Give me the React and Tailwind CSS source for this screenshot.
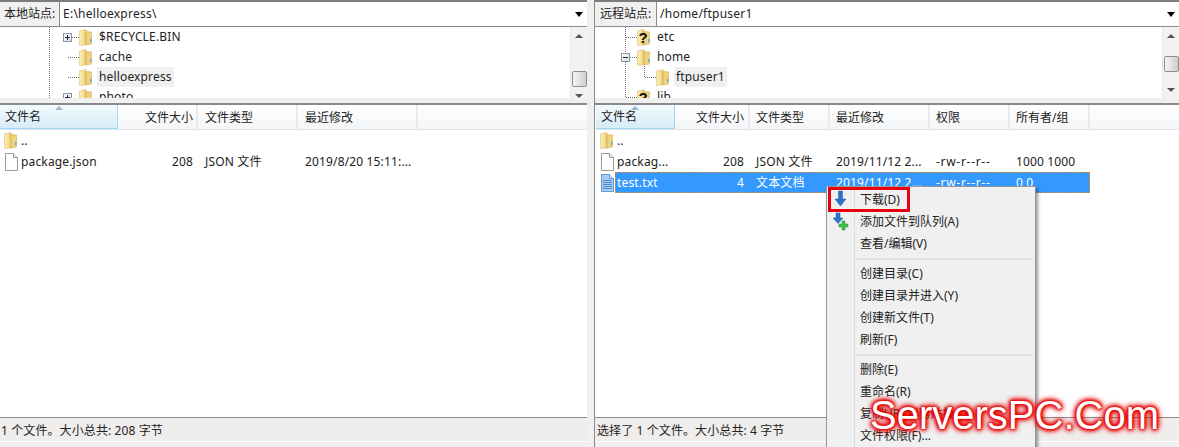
import React from "react";

const ff = "font-['Noto_Sans','Noto_Sans_CJK_SC',sans-serif]";

function Folder({ q }) {
  return (
    <svg width="13" height="17" viewBox="0 0 13 17" className="shrink-0">
      <defs>
        <linearGradient id="fg" x1="0" y1="0" x2="1" y2="0">
          <stop offset="0" stopColor="#fbeeb8" />
          <stop offset="0.7" stopColor="#f5dc8e" />
          <stop offset="1" stopColor="#e3bb5c" />
        </linearGradient>
      </defs>
      <path d="M0.5 2 L7 0.5 L7 16 L0.5 16.5 Z" fill="url(#fg)" stroke="#dcc07a" strokeWidth="0.6" />
      <path d="M7 2.5 L12.5 3 L12.5 15 L7 16 Z" fill="#efd27c" stroke="#d4ac58" strokeWidth="0.6" />
      <rect x="11" y="10" width="1.5" height="3" fill="#5fb0e6" />
      {q && <text x="6.2" y="13.5" textAnchor="middle" fontSize="15" fontWeight="700" fill="#111" fontFamily="Liberation Sans">?</text>}
    </svg>
  );
}

function FileIcon({ blue }) {
  return (
    <svg width="15" height="18" viewBox="0 0 15 18" className="shrink-0">
      <path d="M1.5 0.5 H9.5 L13.5 4.5 V17.5 H1.5 Z" fill={blue ? "#a9cdf1" : "#ffffff"} stroke={blue ? "#5f9bd8" : "#9a9a9a"} />
      <path d="M9.5 0.5 V4.5 H13.5" fill={blue ? "#d8e9fa" : "#eeeeee"} stroke={blue ? "#5f9bd8" : "#9a9a9a"} />
      {blue && <path d="M3 6.5 H12 M3 8.5 H12 M3 10.5 H12 M3 12.5 H12 M3 14.5 H12" stroke="#4d8bd0" strokeWidth="1" />}
    </svg>
  );
}

function PlusBox({ minus }) {
  return (
    <span className="w-[9px] h-[9px] border border-[#8c97a5] bg-gradient-to-br from-white to-[#d8dde6] flex items-center justify-center relative shrink-0">
      <span className="w-[5px] h-px bg-[#1c2a4a]" />
      {!minus && <span className="absolute w-px h-[5px] bg-[#1c2a4a]" />}
    </span>
  );
}

function SiteBar({ label, labelW, value }) {
  return (
    <div className="h-[25px] flex bg-white border-b border-[#8a8a8a] shrink-0">
      <div className={`${labelW} bg-[#f0f0f0] border-r border-[#8a8a8a] flex items-center justify-center text-[12px] text-[#222] shrink-0`}>{label}</div>
      <div className="flex-1 flex items-center pl-[3px] text-[12px] text-[#222] tracking-[0.25px]">{value}</div>
      <div className="w-[17px] flex items-center justify-center shrink-0">
        <span className="border-x-[4px] border-x-transparent border-t-[5px] border-t-black" />
      </div>
    </div>
  );
}

function Scrollbar({ spacer }) {
  return (
    <div className="w-[17px] bg-[#f2f2f2] flex flex-col items-center shrink-0 border-l border-[#e8e8e8]">
      <div className="h-[17px] flex items-center justify-center shrink-0">
        <span className="border-x-[4px] border-x-transparent border-b-[4px] border-b-[#555]" />
      </div>
      <div className={`${spacer} shrink-0`} />
      <div className="w-[15px] h-[16px] rounded-[2px] border border-[#8f8f8f] bg-gradient-to-r from-[#f5f5f5] to-[#cfcfcf] shrink-0" />
      <div className="flex-1" />
      <div className="h-[17px] flex items-center justify-center shrink-0">
        <span className="border-x-[4px] border-x-transparent border-t-[4px] border-t-[#555]" />
      </div>
    </div>
  );
}

function TreeRow({ box, minus, q, text, active, lead }) {
  return (
    <div className="relative h-[20px] flex items-center shrink-0">
      <span className="w-[9px] flex justify-center shrink-0">{box && <PlusBox minus={minus} />}</span>
      <span className={`${lead} shrink-0`} />
      <Folder q={q} />
      <span className={`ml-[5px] px-[2px] h-[20px] leading-[20px] text-[12px] text-[#222] tracking-[0.15px] ${active ? "bg-[#f0f0f0]" : ""}`}>{text}</span>
    </div>
  );
}

function Dots({ d }) {
  return <path d={d} stroke="#707070" strokeWidth="1" strokeDasharray="1 1" fill="none" shapeRendering="crispEdges" />;
}

function Header({ cols }) {
  return (
    <div className="h-[25px] flex shrink-0 bg-gradient-to-b from-white to-[#f3f5f7] border-b border-[#e2e4e7] text-[12px] text-[#222]">
      {cols.map((c, i) => (
        <div
          key={c.t}
          style={{ width: c.w, paddingLeft: c.p, paddingRight: c.r ? c.r + 1 : 0 }}
          className={`relative flex items-center shrink-0 pt-[1px] ${c.r ? "justify-end" : ""} ${
            i === 0 ? "bg-gradient-to-b from-[#f2f9fd] to-[#d8edf8] border-r border-b border-[#9fd8f5]" : "border-r-2 border-[#e8eaed]"
          }`}
        >
          {c.t}
          {i === 0 && (
            <span className={`absolute top-[1px] ${c.arrow} border-x-[4px] border-x-transparent border-b-[4px] border-b-[#9bb5c9]`} />
          )}
        </div>
      ))}
      <div className="flex-1" />
    </div>
  );
}

function Row({ icon, cells, cols, selected }) {
  return (
    <div className="h-[21px] flex items-center text-[12px] text-[#222] tracking-[0.15px] shrink-0 relative">
      {selected && (
        <div style={{ left: selected.left, width: selected.width }} className="absolute inset-y-0 bg-[#3399ff] border border-dashed border-[#d98a30]" />
      )}
      {cols.map((c, i) => (
        <div
          key={c.t}
          style={{ width: c.w, paddingLeft: c.p, paddingRight: c.r ? c.r + 3 : 0 }}
          className={`relative flex items-center shrink-0 whitespace-nowrap overflow-hidden ${c.r ? "justify-end" : ""} ${selected ? "text-white" : ""}`}
        >
          {i === 0 && <span className="w-[16px] mr-[1px] -ml-[1px] flex shrink-0">{icon}</span>}
          {cells[i]}
        </div>
      ))}
    </div>
  );
}

const leftCols = [
  { t: "文件名", w: 118, p: 5, arrow: "left-[55px]" },
  { t: "文件大小", w: 80, p: 5, r: 2 },
  { t: "文件类型", w: 100, p: 7 },
  { t: "最近修改", w: 120, p: 7 },
];
const rightCols = [
  { t: "文件名", w: 79, p: 5, arrow: "left-[35px]" },
  { t: "文件大小", w: 75, p: 5, r: 3 },
  { t: "文件类型", w: 80, p: 6 },
  { t: "最近修改", w: 100, p: 6 },
  { t: "权限", w: 80, p: 6 },
  { t: "所有者/组", w: 80, p: 6 },
];

function MenuItem({ children, icon }) {
  return (
    <div className="h-[22px] flex items-center text-[12px] text-[#222] shrink-0">
      <span className="w-[26px] flex justify-center shrink-0">{icon}</span>
      <span className="pl-[6px] whitespace-nowrap">{children}</span>
    </div>
  );
}

function Sep() {
  return <div className="h-[8px] flex items-center ml-[28px] shrink-0"><div className="h-[2px] w-full mr-[2px] bg-[#e0e0e0]" /></div>;
}

function DownIcon({ plus }) {
  return (
    <svg width="20" height="20" viewBox="0 0 20 20">
      <path d={plus ? "M5 1 H9 V6 H12 L7 11.5 L2 6 H5 Z" : "M7.5 1 H11.5 V9 H15 L9.5 16 L4 9 H7.5 Z"} fill="#2b73c8" stroke="#1f5fa8" strokeWidth="0.5" />
      {plus && <path d="M11 9 H14 V12 H17 V15 H14 V18 H11 V15 H8 V12 H11 Z" fill="#3cc04a" stroke="#2a8f38" strokeWidth="0.5" />}
    </svg>
  );
}

export default function App() {
  return (
    <div className={`relative w-[1179px] h-[447px] overflow-hidden bg-[#f0f0f0] flex ${ff}`}>
      {/* left pane */}
      <div className="w-[587px] h-full flex flex-col shrink-0">
        <div className="h-[2px] bg-[#7c7c7c] shrink-0" />
        <SiteBar label="本地站点:" labelW="w-[60px]" value={"E:\\helloexpress\\"} />
        <div className="h-[71px] flex bg-white shrink-0 overflow-hidden">
          <div className="relative flex-1 flex flex-col overflow-hidden pl-[63px]">
            <svg className="absolute inset-0" width="570" height="71">
              <Dots d="M49.5 0 V71 M72 10.5 H79 M68 30.5 H79 M68 50.5 H79" />
            </svg>
            <TreeRow box lead="w-[7px]" text="$RECYCLE.BIN" />
            <TreeRow lead="w-[7px]" text="cache" />
            <TreeRow lead="w-[7px]" text="helloexpress" active />
            <TreeRow box lead="w-[7px]" text="photo" />
          </div>
          <Scrollbar spacer="h-[27px]" />
        </div>
        <div className="h-[5px] bg-[#f0f0f0] shrink-0" />
        <div className="h-[2px] bg-[#8a8a8a] shrink-0" />
        <div className="flex-1 bg-white flex flex-col min-h-0">
          <Header cols={leftCols} />
          <Row icon={<Folder />} cols={leftCols} cells={[".."]} />
          <Row icon={<FileIcon />} cols={leftCols} cells={["package.json", "208", "JSON 文件", "2019/8/20 15:11:..."]} />
        </div>
        <div className="h-[25px] mb-[5px] border-y border-t-[#8a8a8a] border-b-white bg-[#f0eded] flex items-center pl-[1px] pt-[3px] text-[12px] text-[#222] tracking-[0.1px] shrink-0">
          1 个文件。大小总共: 208 字节
        </div>
      </div>

      {/* splitter */}
      <div className="w-[8px] bg-[#f0f0f0] border-r border-[#8a8a8a] shrink-0" />

      {/* right pane */}
      <div className="flex-1 h-full flex flex-col min-w-0">
        <div className="h-[2px] bg-[#7c7c7c] shrink-0" />
        <SiteBar label="远程站点:" labelW="w-[62px]" value="/home/ftpuser1" />
        <div className="h-[71px] flex bg-white shrink-0 overflow-hidden">
          <div className="relative flex-1 flex flex-col overflow-hidden pl-[26px]">
            <svg className="absolute inset-0" width="570" height="71">
              <Dots d="M30.5 0 V25 M30.5 35 V71 M31 10.5 H42 M35 30.5 H42 M49.5 39 V50.5 H61 M31 70.5 H42" />
            </svg>
            <TreeRow lead="w-[7px]" q text="etc" />
            <TreeRow box minus lead="w-[7px]" text="home" />
            <TreeRow lead="w-[26px]" text="ftpuser1" active />
            <TreeRow lead="w-[7px]" q text="lib" />
          </div>
          <Scrollbar spacer="h-[12px]" />
        </div>
        <div className="h-[5px] bg-[#f0f0f0] shrink-0" />
        <div className="h-[2px] bg-[#8a8a8a] shrink-0" />
        <div className="flex-1 bg-white flex flex-col min-h-0 pl-[1px]">
          <Header cols={rightCols} />
          <Row icon={<Folder />} cols={rightCols} cells={[".."]} />
          <Row icon={<FileIcon />} cols={rightCols} cells={["packag...", "208", "JSON 文件", "2019/11/12 2...", <span className="tracking-[0.7px]">-rw-r--r--</span>, "1000 1000"]} />
          <Row icon={<FileIcon blue />} cols={rightCols} selected={{ left: 19, width: 475 }} cells={["test.txt", "4", "文本文档", "2019/11/12 2...", <span className="tracking-[0.7px]">-rw-r--r--</span>, "0 0"]} />
        </div>
        <div className="h-[25px] mb-[5px] border-y border-t-[#8a8a8a] border-b-white bg-[#f0eded] flex items-center pl-[2px] pt-[3px] text-[12px] text-[#222] tracking-[0.1px] shrink-0">
          选择了 1 个文件。大小总共: 4 字节
        </div>
      </div>

      {/* context menu */}
      <div className="absolute left-[826px] top-[186px] w-[210px] h-[270px] bg-[#f0f0f0] border border-[#979797] shadow-[2px_2px_3px_rgba(0,0,0,0.4)] flex flex-col pt-[2px] pl-[1px]">
        <div className="absolute left-[27px] top-0 bottom-0 w-px bg-[#dcdcdc]" />
        <MenuItem icon={<DownIcon />}>下载(D)</MenuItem>
        <MenuItem icon={<DownIcon plus />}>添加文件到队列(A)</MenuItem>
        <MenuItem>查看/编辑(V)</MenuItem>
        <Sep />
        <MenuItem>创建目录(C)</MenuItem>
        <MenuItem>创建目录并进入(Y)</MenuItem>
        <MenuItem>创建新文件(T)</MenuItem>
        <MenuItem>刷新(F)</MenuItem>
        <Sep />
        <MenuItem>删除(E)</MenuItem>
        <MenuItem>重命名(R)</MenuItem>
        <MenuItem>复制URL到剪贴板(O)</MenuItem>
        <MenuItem>文件权限(F)...</MenuItem>
      </div>

      {/* red highlight */}
      <div className="absolute left-[828px] top-[187px] w-[82px] h-[25px] border-[3px] border-[#e8000e]" />

      {/* watermark */}
      <div className="absolute left-[870px] top-[392px] text-[40px] leading-[46px] text-white font-['Liberation_Sans',sans-serif] [text-shadow:0_0_2px_#e80000,0_0_3px_#e80000,0_0_4px_#e80000,0_0_5px_#e80000,0_0_6px_#e80000,0_0_7px_#e80000]">
        ServersPC.Com
      </div>
    </div>
  );
}
